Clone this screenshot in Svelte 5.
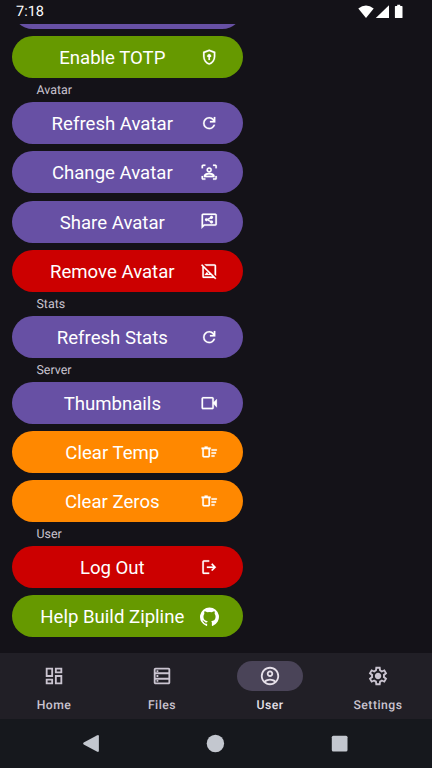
<script>
  const rows = [
    { text: 'Enable TOTP', tone: 'green', icon: 'shield' },
    { label: 'Avatar' },
    { text: 'Refresh Avatar', tone: 'purple', icon: 'refresh' },
    { text: 'Change Avatar', tone: 'purple', icon: 'frame' },
    { text: 'Share Avatar', tone: 'purple', icon: 'share' },
    { text: 'Remove Avatar', tone: 'red', icon: 'noimage' },
    { label: 'Stats' },
    { text: 'Refresh Stats', tone: 'purple', icon: 'refresh' },
    { label: 'Server' },
    { text: 'Thumbnails', tone: 'purple', icon: 'video' },
    { text: 'Clear Temp', tone: 'orange', icon: 'sweep' },
    { text: 'Clear Zeros', tone: 'orange', icon: 'sweep' },
    { label: 'User' },
    { text: 'Log Out', tone: 'red', icon: 'logout' },
    { text: 'Help Build Zipline', tone: 'green', icon: 'github' }
  ];
  const tabs = [
    { text: 'Home', icon: 'home' },
    { text: 'Files', icon: 'files' },
    { text: 'User', icon: 'user', active: true },
    { text: 'Settings', icon: 'settings' }
  ];
  const icons = {
    shield:
      'M12 22q-3.475-.875-5.738-3.988T4 11.1V5l8-3 8 3v6.1q0 3.8-2.262 6.913T12 22Zm0-2.1q2.6-.825 4.3-3.3t1.7-5.5V6.375l-6-2.25-6 2.25V11.1q0 3.025 1.7 5.5t4.3 3.3Z M11 15.8h2v-4.2h1.3q.3-.5.3-1.1 0-1.1-.75-1.85T12 7.9q-1.1 0-1.85.75T9.4 10.5q0 .6.3 1.1H11Z',
    refresh:
      'M12 20q-3.35 0-5.675-2.325T4 12q0-3.35 2.325-5.675T12 4q1.725 0 3.3.712T18 6.75V4h2v7h-7V9h4.2q-.8-1.4-2.187-2.2T12 6Q9.5 6 7.75 7.75T6 12q0 2.5 1.75 4.25T12 18q1.925 0 3.475-1.1T17.65 14h2.1q-.7 2.65-2.85 4.325T12 20Z',
    frame:
      'M2 7V4q0-.825.588-1.412T4 2h3v2H4v3H2Zm5 15H4q-.825 0-1.412-.587T2 20v-3h2v3h3v2Zm10 0v-2h3v-3h2v3q0 .825-.587 1.413T20 22h-3Zm3-15V4h-3V2h3q.825 0 1.413.588T22 4v3h-2ZM12 12.5q-1.45 0-2.475-1.025T8.5 9q0-1.45 1.025-2.475T12 5.5q1.45 0 2.475 1.025T15.5 9q0 1.45-1.025 2.475T12 12.5Zm0-2q.625 0 1.063-.437T13.5 9q0-.625-.437-1.062T12 7.5q-.625 0-1.062.438T10.5 9q0 .625.438 1.063T12 10.5ZM5 18.5v-1.85q0-.75.387-1.4t1.063-1q1.275-.725 2.675-1.1T12 12.75q1.475 0 2.875.4t2.675 1.1q.675.35 1.063 1T19 16.65v1.85H5Zm3.45-2.5q-.55.25-.8.5h8.7q-.25-.25-.8-.5-.8-.45-1.7-.7T12 14.9q-.95 0-1.85.35t-1.7.75Z',
    share:
      'M2 22V4q0-.825.588-1.412T4 2h16q.825 0 1.413.588T22 4v12q0 .825-.587 1.413T20 18H6l-4 4Zm3.15-6H20V4H4v13.125L5.15 16Z M15 15q.83 0 1.42-.58T17 13t-.58-1.42T15 11q-.55 0-1 .27L10.9 10 14 8.73q.45.27 1 .27.83 0 1.42-.58T17 7t-.58-1.42T15 5t-1.42.58T13 7v.3L9.5 8.8Q9.3 8 8.5 8q-.83 0-1.42.58T6.5 10t.58 1.42T8.5 12q.75 0 1-.8l3.5 1.5v.3q0 .83.58 1.42T15 15Z',
    noimage:
      'M21 18.15l-2-2V5H7.85l-2-2H19q.825 0 1.413.587T21 5v13.15Zm-1.2 4.45L18.2 21H5q-.825 0-1.412-.587T3 19V5.8L1.4 4.2l1.4-1.4 18.4 18.4-1.4 1.4ZM6 17l3-4 2.25 3 .825-1.1L5 7.825V19h11.175l-2-2H6Z',
    video:
      'M4 20q-.825 0-1.412-.587T2 18V6q0-.825.588-1.412T4 4h12q.825 0 1.413.588T18 6v4.5l4-4v11l-4-4V18q0 .825-.587 1.413T16 20H4Zm0-2h12V6H4v12Z',
    sweep:
      'M15 18v-2h4v2h-4Zm0-8V8h7v2h-7Zm0 4v-2h6v2h-6ZM3 8H2V6h4V4.5h4V6h4v2h-1v9q0 .825-.587 1.413T11 19H5q-.825 0-1.412-.587T3 17V8Zm2 0v9h6V8H5Z',
    logout:
      'M5 21q-.825 0-1.412-.587T3 19V5q0-.825.588-1.412T5 3h7v2H5v14h7v2H5Zm11-4-1.375-1.45 2.55-2.55H9v-2h8.175l-2.55-2.55L16 7l5 5-5 5Z',
    github:
      'M12 .5a12 12 0 0 0-3.8 23.38c.6.12.83-.26.83-.57v-2.23c-3.34.73-4.04-1.42-4.04-1.42-.55-1.39-1.34-1.76-1.34-1.76-1.08-.74.09-.73.09-.73 1.2.09 1.84 1.24 1.84 1.24 1.07 1.83 2.8 1.3 3.49 1 .1-.78.42-1.31.76-1.61-2.66-.3-5.47-1.33-5.47-5.93 0-1.31.47-2.38 1.24-3.22-.14-.3-.54-1.52.1-3.18 0 0 1.01-.32 3.3 1.23a11.5 11.5 0 0 1 6.02 0c2.28-1.55 3.29-1.23 3.29-1.23.64 1.66.24 2.88.12 3.18a4.65 4.65 0 0 1 1.23 3.22c0 4.61-2.8 5.63-5.48 5.92.42.36.81 1.1.81 2.22v3.29c0 .31.2.69.82.57A12 12 0 0 0 12 .5Z',
    home:
      'M3 13V3h8v10H3Zm10-4V3h8v6h-8Zm0 12V11h8v10h-8ZM3 21v-6h8v6H3Zm2-10h4V5H5v6Zm10 8h4v-6h-4v6Zm0-12h4V5h-4v2ZM5 19h4v-2H5v2Z',
    files:
      'M5 3h14q.83 0 1.41.59T21 5v14q0 .83-.59 1.41T19 21H5q-.83 0-1.41-.59T3 19V5q0-.83.59-1.41T5 3Zm0 2v3h14V5H5Zm0 5v4h14v-4H5Zm0 6v3h14v-3H5ZM6 5.7h2v2H6Zm0 5.3h2v2H6Zm0 5.3h2v2H6Z',
    user:
      'M5.85 17.1q1.275-.975 2.85-1.537T12 15q1.725 0 3.3.563t2.85 1.537q.875-1.025 1.363-2.325T20 12q0-3.325-2.337-5.663T12 4Q8.675 4 6.338 6.338T4 12q0 1.475.488 2.775T5.85 17.1ZM12 13q-1.475 0-2.487-1.012T8.5 9.5q0-1.475 1.013-2.487T12 6q1.475 0 2.488 1.013T15.5 9.5q0 1.475-1.012 2.488T12 13Zm0 9q-2.075 0-3.9-.787t-3.175-2.138q-1.35-1.35-2.137-3.175T2 12q0-2.075.788-3.9t2.137-3.175q1.35-1.35 3.175-2.137T12 2q2.075 0 3.9.788t3.175 2.137q1.35 1.35 2.138 3.175T22 12q0 2.075-.787 3.9t-2.138 3.175q-1.35 1.35-3.175 2.138T12 22Zm0-2q1.325 0 2.5-.387t2.15-1.113q-.975-.725-2.15-1.112T12 17q-1.325 0-2.5.388T7.35 18.5q.975.725 2.15 1.113T12 20Zm0-9q.65 0 1.075-.425T13.5 9.5q0-.65-.425-1.075T12 8q-.65 0-1.075.425T10.5 9.5q0 .65.425 1.075T12 11Z',
    settings:
      'm9.25 22-.4-3.2q-.325-.125-.612-.3t-.563-.375L4.7 19.375l-2.75-4.75 2.575-1.95Q4.5 12.5 4.5 12.337v-.675q0-.162.025-.337L1.95 9.375l2.75-4.75 2.975 1.25q.275-.2.575-.375t.6-.3l.4-3.2h5.5l.4 3.2q.325.125.613.3t.562.375l2.975-1.25 2.75 4.75-2.575 1.95q.025.175.025.337v.675q0 .163-.05.338l2.575 1.95-2.75 4.75-2.95-1.25q-.275.2-.575.375t-.6.3l-.4 3.2h-5.5ZM11 20h1.975l.35-2.65q.775-.2 1.438-.587t1.212-.938l2.475 1.025.975-1.7-2.15-1.625q.125-.35.175-.737T17.5 12q0-.4-.05-.787t-.175-.738l2.15-1.625-.975-1.7-2.475 1.05q-.55-.575-1.212-.962t-1.438-.588L13 4h-1.975l-.35 2.65q-.775.2-1.437.588t-1.213.937L5.55 7.15l-.975 1.7 2.15 1.6q-.125.375-.175.75t-.05.8q0 .4.05.775t.175.75l-2.15 1.625.975 1.7 2.475-1.05q.55.575 1.213.963t1.437.587L11 20Zm1.05-4.5q1.45 0 2.475-1.025T15.55 12q0-1.45-1.025-2.475T12.05 8.5q-1.475 0-2.488 1.025T8.55 12q0 1.45 1.012 2.475T12.05 15.5Z'
  };
</script>

<div class="screen">
  <header>
    <span>7:18</span>
    <svg width="50" height="16" viewBox="0 0 50 16" fill="#fff">
      <path d="M.3 4.6Q8 -1.4 15.7 4.6L8 14Z" />
      <path d="M31 1.2V14H17.8Z" />
      <path d="M40 .8h3v1.1h1.7q.6 0 .6.6v11q0 .6-.6.6h-6.4q-.6 0-.6-.6v-11q0-.6.6-.6H40Z" transform="translate(-.8 0)" />
    </svg>
  </header>

  <main>
    <div class="partial"></div>
    {#each rows as row}
      {#if row.label}
        <div class="label">{row.label}</div>
      {:else}
        <button class={row.tone}>
          <span>{row.text}</span>
          <svg class="icon" class:brand={row.icon === 'github'} viewBox="0 0 24 24"><path fill-rule={row.icon === 'shield' ? 'evenodd' : 'nonzero'} d={icons[row.icon]} /></svg>
        </button>
      {/if}
    {/each}
  </main>

  <nav>
    {#each tabs as tab}
      <div class="tab" class:active={tab.active}>
        <div class="pill">
          <svg viewBox="0 0 24 24"><path fill-rule={tab.icon === 'files' ? 'evenodd' : 'nonzero'} d={icons[tab.icon]} /></svg>
        </div>
        <span>{tab.text}</span>
      </div>
    {/each}
  </nav>

  <footer>
    <svg width="432" height="49" viewBox="0 0 432 49" fill="#c3c7cf">
      <path d="M83.7 23.6 96.8 16.4Q98.9 15.3 98.9 17.4V31.6Q98.9 33.7 96.8 32.6L83.7 25.4Q82.5 24.5 83.7 23.6Z" />
      <circle cx="215.4" cy="24.5" r="8.7" />
      <rect x="331.8" y="16.7" width="15.7" height="15.7" rx="1.5" />
    </svg>
  </footer>
</div>

<style>
  :global(body) { margin: 0; background: #141218; }
  .screen {
    width: 432px;
    height: 768px;
    display: flex;
    flex-direction: column;
    overflow: hidden;
    background: #141218;
    font-family: Roboto, sans-serif;
    text-rendering: geometricPrecision;
  }
  header {
    height: 24px;
    flex: none;
    display: flex;
    justify-content: space-between;
    align-items: flex-start;
    padding: 3px 24px 0 16px;
    box-sizing: border-box;
    color: #fff;
    font-size: 14.5px;
    line-height: 17px;
  }
  header svg { margin-top: 1px; }
  main {
    flex: none;
    height: 629px;
    padding-left: 12px;
    box-sizing: border-box;
    display: flex;
    flex-direction: column;
    overflow: hidden;
  }
  .partial {
    flex: none;
    width: 231px;
    height: 42px;
    margin: -37.2px 0 7.4px;
    border-radius: 21px;
    background: #6750a4;
  }
  button {
    flex: none;
    display: flex;
    align-items: center;
    width: 231px;
    height: 42px;
    margin: 0 0 7.22px;
    padding: 0 25px 0 0;
    border: 0;
    border-radius: 21px;
    color: #fff;
    font: 400 18.6px/22px Roboto, sans-serif;
  }
  button span { flex: 1; text-align: center; padding: 2px 0 0 13px; white-space: nowrap; }
  .icon { width: 18.4px; height: 18.4px; flex: none; fill: #fff; stroke: #fff; stroke-width: .25px; }
  .brand { width: 19px; height: 19px; margin-right: -.6px; stroke: none; }
  .green { background: #669900; }
  .purple { background: #6750a4; }
  .red { background: #cc0000; }
  .orange { background: #ff8800; }
  .label {
    flex: none;
    height: 16.75px;
    padding-left: 24.5px;
    color: #cac4d0;
    font-size: 12.4px;
    line-height: 12.5px;
  }
  nav {
    flex: none;
    height: 66px;
    display: flex;
    background: #211f26;
  }
  .tab {
    flex: 1;
    display: flex;
    flex-direction: column;
    align-items: center;
    color: #cac4d0;
    font-size: 12.2px;
    line-height: 15px;
    font-weight: 500;
    letter-spacing: .5px;
  }
  .pill {
    width: 66px;
    height: 30px;
    margin: 8px 0 7px;
    border-radius: 15px;
    display: flex;
    align-items: center;
    justify-content: center;
  }
  .pill svg { width: 22px; height: 22px; fill: currentColor; }
  .active { color: #e6e0e9; }
  .active .pill { background: #4a4458; }
  footer { height: 49px; flex: none; background: #16181d; }
  footer svg { display: block; }
</style>
